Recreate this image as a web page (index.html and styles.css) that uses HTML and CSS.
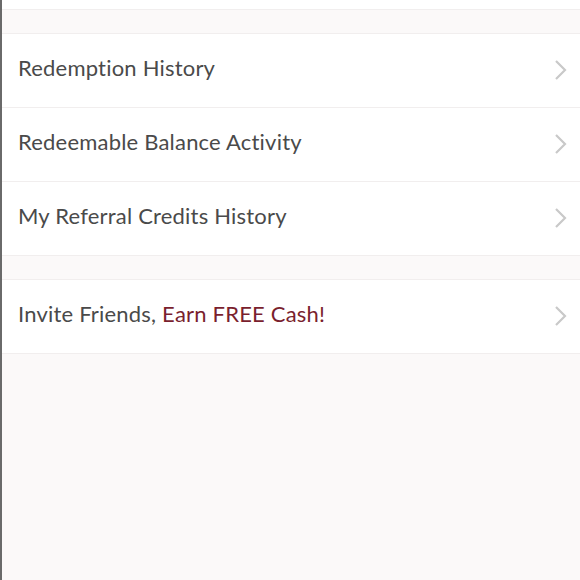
FILE: index.html
```html
<!DOCTYPE html>
<html lang="en">
<head>
  <meta charset="UTF-8">
  <meta name="viewport" content="width=device-width, initial-scale=1.0">
  <title>Rewards</title>
  <link rel="stylesheet" href="styles.css">
</head>
<body>

  <div class="page">
    <div class="top-strip"></div>

    <!-- History links -->
    <div class="spacer"></div>
    <ul class="menu">
      <li class="menu-item">
        <span class="label">Redemption History</span>
        <svg class="chevron" viewBox="0 0 14 22"><path d="M2 2 L11 11 L2 20"/></svg>
      </li>
      <li class="menu-item">
        <span class="label">Redeemable Balance Activity</span>
        <svg class="chevron" viewBox="0 0 14 22"><path d="M2 2 L11 11 L2 20"/></svg>
      </li>
      <li class="menu-item">
        <span class="label">My Referral Credits History</span>
        <svg class="chevron" viewBox="0 0 14 22"><path d="M2 2 L11 11 L2 20"/></svg>
      </li>
    </ul>

    <!-- Invite -->
    <div class="spacer"></div>
    <ul class="menu">
      <li class="menu-item">
        <span class="label">Invite Friends, <span class="accent">Earn FREE Cash!</span></span>
        <svg class="chevron" viewBox="0 0 14 22"><path d="M2 2 L11 11 L2 20"/></svg>
      </li>
    </ul>
  </div>

</body>
</html>
```

FILE: styles.css
```css
/* Basis */
html, body {
  height: 100%;
}

body {
  margin: 0;
  font-family: Lato, "Open Sans", Arial, sans-serif;
  background-color: #fbf9f9;
  color: #4a4a4a;
}

.page {
  min-height: 100%;
  border-left: 2px solid #6a6a6a;
  box-sizing: border-box;
}

.top-strip {
  height: 9px;
  background-color: #fff;
  border-bottom: 1px solid #f1eeee;
}

.spacer {
  height: 23px;
}

/* Listen */
.menu {
  list-style: none;
  margin: 0;
  padding: 0;
  background-color: #fff;
  border-top: 1px solid #f1eeee;
}

.menu-item {
  display: flex;
  align-items: center;
  justify-content: space-between;
  height: 73px;
  padding: 0 12px 0 16px;
  border-bottom: 1px solid #f1eeee;
}

.label {
  font-size: 22px;
  line-height: 26px;
  letter-spacing: 0.2px;
  margin-top: -5px;
}

.accent {
  color: #7a1f2e;
}

.chevron {
  width: 14px;
  height: 22px;
  margin-top: -2px;
  fill: none;
  stroke: #c9c9c9;
  stroke-width: 2.2;
}
```
